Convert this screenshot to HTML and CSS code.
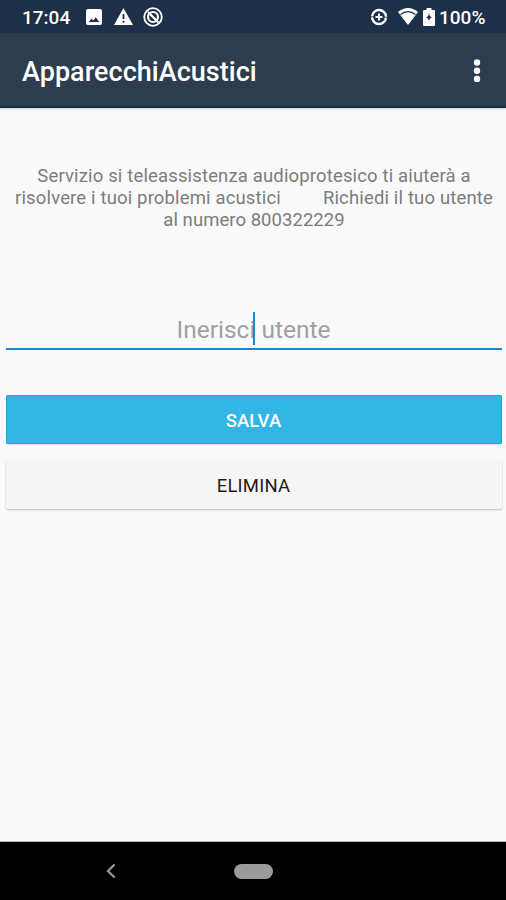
FILE: index.html
```html
<!DOCTYPE html>
<html lang="it">
<head>
<meta charset="utf-8">
<title>ApparecchiAcustici</title>
<link rel="stylesheet" href="styles.css">
</head>
<body>
<div class="status">
  <span class="clock">17:04</span>
  <svg class="ic-image" width="16" height="16" viewBox="0 0 16 16"><path fill="#fff" fill-rule="evenodd" d="M2 0h12a2 2 0 0 1 2 2v12a2 2 0 0 1-2 2H2a2 2 0 0 1-2-2V2a2 2 0 0 1 2-2zM2.8 13h10.4L9.8 8.2l-2.5 3.3-1.8-2z"/></svg>
  <svg class="ic-alert" width="19" height="17" viewBox="0 0 19 17"><path fill="#fff" fill-rule="evenodd" d="M9.500 0 19 17H0zM8.600 6v5h1.800V6zM8.600 12.700v2h1.800v-2z"/></svg>
  <svg class="ic-block" width="20" height="20" viewBox="0 0 20 20" fill="none" stroke="#fff"><circle cx="10" cy="10" r="8.800" stroke-width="1.800"/><circle cx="10" cy="10" r="5" stroke-width="2.200"/><path stroke-width="2.200" d="M5 5l10.500 10.500"/></svg>
  <svg class="ic-saver" width="18" height="18" viewBox="0 0 18 18" fill="none" stroke="#fff"><circle cx="9" cy="9" r="7" stroke-width="2.400" stroke-dasharray="20.790 1.200" stroke-dashoffset="-.600"/><path stroke-width="1.900" d="M9 5.500v7M5.500 9h7"/></svg>
  <svg class="ic-wifi" width="20" height="17" viewBox="0 0 20 17"><path fill="#fff" d="M0 4Q10-4 20 4L10 17z"/><path fill="none" stroke="#1d3048" stroke-width="1.200" d="M2.500 6.400q7.500-5.400 15 0"/></svg>
  <svg class="ic-battery" width="12" height="18" viewBox="0 0 12 18"><path fill="#fff" d="M3.500 0h5v2H11a1 1 0 0 1 1 1v14a1 1 0 0 1-1 1H1a1 1 0 0 1-1-1V3a1 1 0 0 1 1-1h2.500z"/><path fill="#1d3048" d="M6 5.500l1 2.700 2 1.100-2 1.100-1 2.700-1-2.700-2-1.100 2-1.100z"/></svg>
  <span class="percent">100%</span>
</div>
<header class="appbar">
  <h1>ApparecchiAcustici</h1>
  <svg width="10" height="26" viewBox="0 0 10 26" fill="#fff"><circle cx="5" cy="5.500" r="3.200"/><circle cx="5" cy="13.700" r="3.200"/><circle cx="5" cy="21.900" r="3.200"/></svg>
</header>
<main>
  <p class="info"><span class="l1">Servizio si teleassistenza audioprotesico ti aiuterà a</span><span class="l2">risolvere i tuoi problemi acustici<i></i>Richiedi il tuo utente</span><span class="l3">al numero 800322229</span></p>
  <div class="field"><span>Inerisci utente</span><b class="caret"></b></div>
  <button class="btn save">SALVA</button>
  <button class="btn delete">ELIMINA</button>
</main>
<nav>
  <svg width="10" height="16" viewBox="0 0 10 16"><path fill="none" stroke="#999" stroke-width="2.200" d="M8.600 1.500 2 8l6.600 6.500"/></svg>
  <span class="home"></span>
</nav>
</body>
</html>
```
FILE: styles.css
```css
* { box-sizing: border-box; }
body {
  margin: 0;
  height: 900px;
  display: flex;
  flex-direction: column;
  overflow: hidden;
  background: #fafafa;
  font-family: Roboto, sans-serif;
}
svg { display: block; flex: none; }
.status {
  height: 33px;
  flex: none;
  display: flex;
  align-items: center;
  padding: 0 20px 0 22px;
  background: #1d3048;
  color: #fff;
  font-size: 19px;
  font-weight: 500;
  line-height: 34px;
}
.clock { width: 64px; padding-top: 2px; }
.ic-alert { margin-left: 12px; }
.ic-block { margin-left: 10px; }
.ic-saver { margin-left: auto; }
.ic-wifi { margin-left: 10px; }
.ic-battery { margin-left: 5px; }
.percent { width: 47px; margin-left: 4px; padding-top: 2px; }
.appbar {
  height: 75px;
  flex: none;
  display: flex;
  align-items: center;
  justify-content: space-between;
  padding: 0 24px 0 22px;
  background: #2d3c4f;
  border-bottom: 2px solid #1b2c49;
  box-shadow: 0 1px 2px #0003;
  color: #fff;
}
h1 {
  margin: 5px 0 0;
  font-size: 27px;
  font-weight: 500;
  letter-spacing: 0.030px;
  white-space: nowrap;
}
main {
  flex: 1;
  display: flex;
  flex-direction: column;
  padding: 57px 4px 0 6px;
}
.info {
  margin: 0;
  display: flex;
  flex-direction: column;
  align-items: center;
  color: #7c7c7c;
  font-size: 18.500px;
  letter-spacing: 0.150px;
  line-height: 22px;
  white-space: nowrap;
}
.l3 { letter-spacing: 0.050px; }
.info i { display: inline-block; width: 42px; }
.field {
  position: relative;
  height: 40px;
  margin-top: 79px;
  border-bottom: 2px solid #1c88d0;
  color: #a0a0a0;
  font-size: 24.500px;
  line-height: 40px;
  text-align: center;
}
.field span { margin-right: 1px; }
.caret {
  position: absolute;
  left: 247px;
  top: 2px;
  width: 2px;
  height: 33px;
  background: #1c88d0;
}
.btn {
  height: 49px;
  padding: 2px 1px 0 0;
  border: 0;
  border-radius: 2px;
  font: 500 18.500px Roboto, sans-serif;
}
.save {
  margin-top: 45px;
  background: #33b5e5;
  box-shadow: inset 0 0 0 1px #20a8dc, 0 1px 1px #0002;
  color: #fff;
}
.delete {
  margin-top: 16px;
  background: #f5f5f5;
  box-shadow: 0 1px 2px #0004;
  color: #1c1c1c;
  font-weight: 400;
  letter-spacing: 0.200px;
}
nav {
  height: 58px;
  flex: none;
  display: flex;
  align-items: center;
  padding-left: 106px;
  background: #000;
  box-shadow: 0 -1px 0 #bbb;
}
.home {
  width: 39px;
  height: 15px;
  margin-left: 118px;
  border-radius: 8px;
  background: #9b9b9b;
}
```
